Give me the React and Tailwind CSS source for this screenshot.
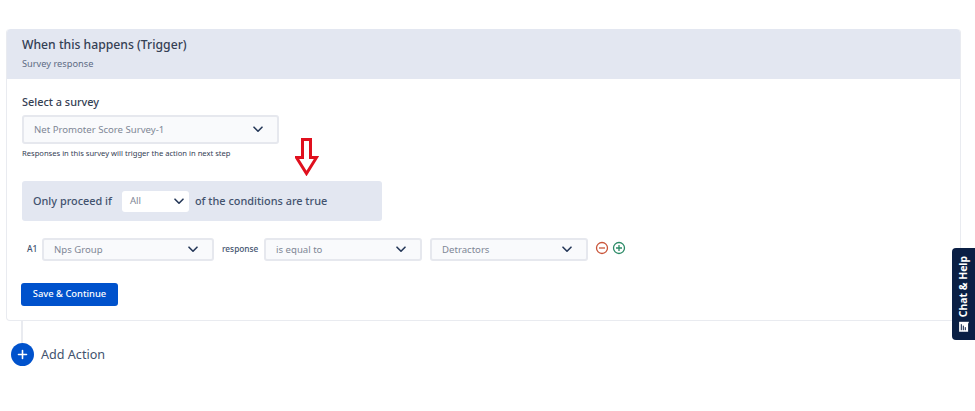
function Chevron() {
  return (
    <svg width="10" height="7" viewBox="0 0 10 7" fill="none" stroke="#253858" strokeWidth="1.6" strokeLinecap="round" strokeLinejoin="round">
      <path d="M1 1.2 5 5.2l4-4" />
    </svg>
  );
}

function Select({ label, className }) {
  return (
    <div className={'h-[23px] flex items-center justify-between rounded-[3px] border-2 border-[#e6e8ee] bg-[#f9fafc] pl-[10px] pr-[14px] text-[9.6px] text-[#7f8796] ' + className}>
      <span className="pt-[2px]">{label}</span>
      <Chevron />
    </div>
  );
}

export default function App() {
  return (
    <div className="relative w-[975px] h-[411px] overflow-hidden bg-white font-['Noto_Sans','Open_Sans',sans-serif] text-[#42526e]">
      <div className="pl-[6px] pt-[29px] w-[961px]">
        <div className="rounded-[4px] border border-[#e9ebf0] border-t-0 h-[292px]">
          <div className="h-[50px] bg-[#e3e7f1] rounded-t-[4px] pl-[15px] pt-[7px]">
            <div className="text-[12.2px] leading-[18px] font-medium text-[#344054]">When this happens (Trigger)</div>
            <div className="text-[9.25px] leading-[14px] mt-[3px] text-[#5e6c84]">Survey response</div>
          </div>
          <div className="pl-[15px] pt-[15px]">
            <div className="text-[10.9px] leading-[16px] font-medium text-[#344054]">Select a survey</div>
            <Select label="Net Promoter Score Survey-1" className="w-[257px] h-[29px] mt-[5px]" />
            <div className="text-[7.6px] leading-[10px] mt-[4px] text-[#344054]">Responses in this survey will trigger the action in next step</div>
            <div className="mt-[23px] w-[360px] h-[40px] rounded-[3px] bg-[#e3e7f1] flex items-center pl-[11px] text-[10.9px] font-medium text-[#42526e]">
              <span>Only proceed if</span>
              <div className="ml-[10px] w-[67px] h-[21px] rounded-[3px] bg-white flex items-center justify-between pl-[8px] pr-[5px] text-[9.6px] font-normal text-[#7f8796]">
                <span>All</span>
                <Chevron />
              </div>
              <span className="ml-[6px]">of the conditions are true</span>
            </div>
            <div className="flex items-center mt-[17px] -ml-[15px] pl-[20px]">
              <span className="w-[15px] text-[8.5px] font-medium text-[#42526e]">A1</span>
              <Select label="Nps Group" className="w-[172px]" />
              <span className="ml-[8px] w-[42px] text-[8.3px] font-medium text-[#42526e]">response</span>
              <Select label="is equal to" className="w-[158px]" />
              <Select label="Detractors" className="w-[158px] ml-[8px]" />
              <div className="flex items-center gap-[3px] ml-[7px] -mt-[3px]">
                <svg width="14" height="14" viewBox="0 0 14 14" fill="none" stroke="#c9553a" strokeWidth="1.3">
                  <circle cx="7" cy="7" r="5.5" />
                  <path d="M4 7h6" />
                </svg>
                <svg width="14" height="14" viewBox="0 0 14 14" fill="none" stroke="#2b8a66" strokeWidth="1.3">
                  <circle cx="7" cy="7" r="5.5" />
                  <path d="M4 7h6M7 4v6" />
                </svg>
              </div>
            </div>
            <button className="mt-[22px] -ml-[1px] w-[97px] h-[23px] rounded-[3px] bg-[#0052cc] text-white text-[9.4px] font-medium flex items-center justify-center">Save &amp; Continue</button>
          </div>
        </div>
        <div className="ml-[15px] w-[2px] h-[22px] bg-[#e9ebf0]" />
        <div className="flex items-center ml-[5px]">
          <div className="w-[23px] h-[23px] rounded-full bg-[#0052cc] flex items-center justify-center">
            <svg width="11" height="11" viewBox="0 0 11 11" stroke="#fff" strokeWidth="1.6" strokeLinecap="round"><path d="M1.5 5.5h8M5.5 1.5v8" /></svg>
          </div>
          <span className="ml-[7px] pt-[1px] text-[12.6px] text-[#42526e]">Add Action</span>
        </div>
      </div>

      {/* annotation arrow */}
      <svg className="absolute left-[295px] top-[138px]" width="24" height="38" viewBox="0 0 24 38" fill="none" stroke="#e0101e" strokeWidth="3">
        <path d="M7.5 1.5h8v18h6L11.5 35.5 1.5 19.5h6z" />
      </svg>

      {/* chat tab */}
      <div className="absolute left-[952px] top-[248px] w-[23px] h-[92px] rounded-l-[4px] bg-[#0a1f44] flex items-center justify-center">
        <div className="[writing-mode:vertical-rl] rotate-180 flex items-center gap-[4px] text-white text-[10.4px] font-bold whitespace-nowrap">
          <svg width="11" height="11" viewBox="0 0 11 11" className="rotate-180">
            <path d="M0.5 0.5H10.5L9.5 2.5V10.5H0.5z" fill="#fff" />
            <path d="M2.7 3v6M4.7 4.5V9M6.7 6v3" stroke="#0a1f44" strokeWidth="1" />
          </svg>
          <span>Chat &amp; Help</span>
        </div>
      </div>
    </div>
  );
}
